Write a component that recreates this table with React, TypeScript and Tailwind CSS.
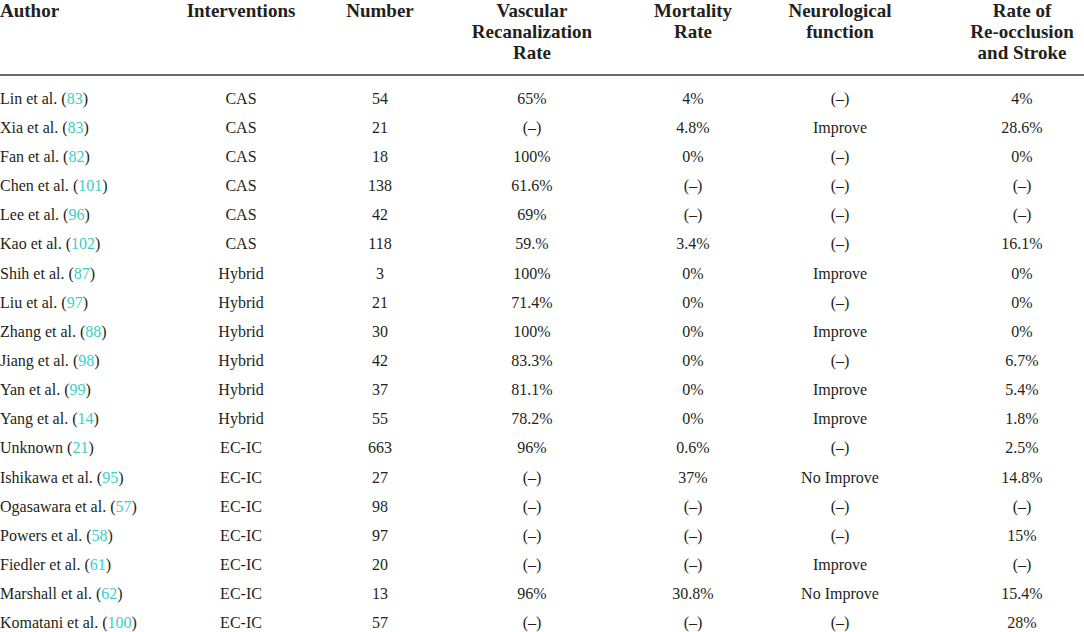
import React from "react";

const ROWS = [
  ["Lin et al.", "83", "CAS", "54", "65%", "4%", "(\u2013)", "4%"],
  ["Xia et al.", "83", "CAS", "21", "(\u2013)", "4.8%", "Improve", "28.6%"],
  ["Fan et al.", "82", "CAS", "18", "100%", "0%", "(\u2013)", "0%"],
  ["Chen et al.", "101", "CAS", "138", "61.6%", "(\u2013)", "(\u2013)", "(\u2013)"],
  ["Lee et al.", "96", "CAS", "42", "69%", "(\u2013)", "(\u2013)", "(\u2013)"],
  ["Kao et al.", "102", "CAS", "118", "59.%", "3.4%", "(\u2013)", "16.1%"],
  ["Shih et al.", "87", "Hybrid", "3", "100%", "0%", "Improve", "0%"],
  ["Liu et al.", "97", "Hybrid", "21", "71.4%", "0%", "(\u2013)", "0%"],
  ["Zhang et al.", "88", "Hybrid", "30", "100%", "0%", "Improve", "0%"],
  ["Jiang et al.", "98", "Hybrid", "42", "83.3%", "0%", "(\u2013)", "6.7%"],
  ["Yan et al.", "99", "Hybrid", "37", "81.1%", "0%", "Improve", "5.4%"],
  ["Yang et al.", "14", "Hybrid", "55", "78.2%", "0%", "Improve", "1.8%"],
  ["Unknown", "21", "EC-IC", "663", "96%", "0.6%", "(\u2013)", "2.5%"],
  ["Ishikawa et al.", "95", "EC-IC", "27", "(\u2013)", "37%", "No Improve", "14.8%"],
  ["Ogasawara et al.", "57", "EC-IC", "98", "(\u2013)", "(\u2013)", "(\u2013)", "(\u2013)"],
  ["Powers et al.", "58", "EC-IC", "97", "(\u2013)", "(\u2013)", "(\u2013)", "15%"],
  ["Fiedler et al.", "61", "EC-IC", "20", "(\u2013)", "(\u2013)", "Improve", "(\u2013)"],
  ["Marshall et al.", "62", "EC-IC", "13", "96%", "30.8%", "No Improve", "15.4%"],
  ["Komatani et al.", "100", "EC-IC", "57", "(\u2013)", "(\u2013)", "(\u2013)", "28%"],
];

const COLS = "grid grid-cols-[180px_122px_156px_148px_174px_120px_184px]";

export default function App() {
  return (
    <div className="w-[1084px] h-[632px] overflow-hidden bg-white text-[#231f20] font-['Liberation_Serif',serif]">
      <div className={`${COLS} h-[76px] border-b-2 border-[#6b6b6b] text-[19px] leading-[21px] font-bold text-center`}>
        <div className="text-left">Author</div>
        <div>Interventions</div>
        <div>Number</div>
        <div>Vascular<br />Recanalization<br />Rate</div>
        <div>Mortality<br />Rate</div>
        <div>Neurological<br />function</div>
        <div className="pl-[60px]">Rate of<br />Re-occlusion<br />and Stroke</div>
      </div>

      <div className="pt-[8px] text-[16px]">
        {ROWS.map((r, i) => (
          <div key={i} className={`${COLS} h-[29.17px] items-center text-center`}>
            <div className="text-left whitespace-nowrap">
              {r[0]} (<span className="text-[#3ccfbf]">{r[1]}</span>)
            </div>
            <div>{r[2]}</div>
            <div>{r[3]}</div>
            <div>{r[4]}</div>
            <div>{r[5]}</div>
            <div>{r[6]}</div>
            <div className="pl-[60px]">{r[7]}</div>
          </div>
        ))}
      </div>
    </div>
  );
}
